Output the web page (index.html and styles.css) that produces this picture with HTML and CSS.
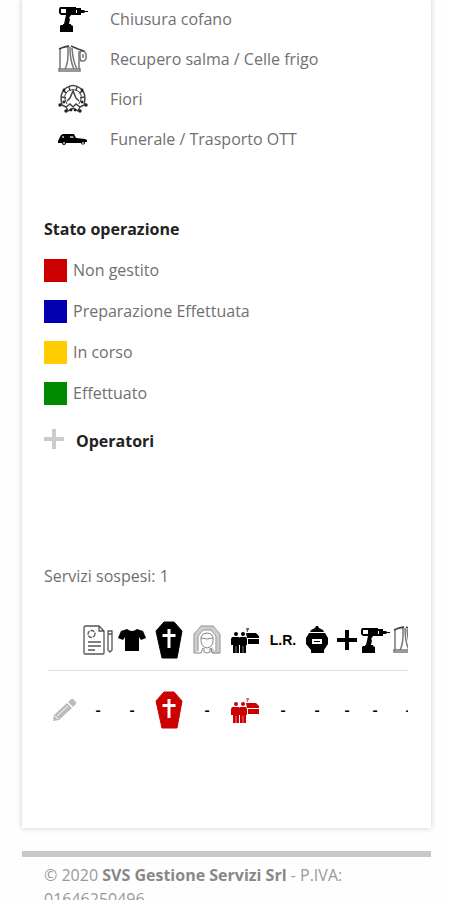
FILE: index.html
```html
<!DOCTYPE html>
<html lang="it">
<head>
<meta charset="utf-8">
<meta name="viewport" content="width=device-width, initial-scale=1">
<title>SVS Gestione Servizi</title>
<link rel="stylesheet" href="styles.css">
</head>
<body>
<svg class="sprite" aria-hidden="true">
  <symbol id="drill" viewBox="0 0 30 26">
    <path d="M2 1h16v1h5v2h3l1 1h3v1h-3l-1 1h-3v2H13l-2 3 1 1-1 5h2v1H5v-1h1l2-9H3L1 7V3z"/>
    <path d="M3 19h10l2 1v6H2v-6z"/>
    <path fill="#fff" d="M3 3h5v4H3zM18 4h1v3h-1z"/>
  </symbol>
  <symbol id="curtain" viewBox="0 0 30 28">
    <g fill="none" stroke="#777" stroke-width="1.500">
      <path d="M2 4v20M10 2v8q0 8-3 14M12 2q0 14 4 22M14 3q1 14 5 21M21 6v18M1 24h21v2H1z"/>
      <path d="M23 6h3l2 3v5l-2 2h-3l-1-3V8zM25 9v4"/>
    </g>
    <path fill="none" stroke="#444" stroke-width="1.800" d="M1 4l5-2 5-1M13 1l7 3 6 2"/>
  </symbol>
  <symbol id="wreath" viewBox="0 0 30 30">
    <g fill="none" stroke="#444">
      <path stroke-width="1.500" d="M4 20Q1 9 8 4q7-5 14 0 7 5 4 16"/>
      <path d="M9 20Q4 11 10 7q5-3 10 0 6 4 1 13"/>
      <path stroke-width="1.500" d="M9 17l3-3 3-7 3 7 3 3M4 13l4 1M5 7l4 2M11 3l1 3M19 3l-1 3M25 7l-4 2M26 13l-4 1M2 20l6 3 4-3 3 3 3-3 4 3 6-3M8 23l2 4 5-3 5 3 2-4"/>
    </g>
    <g fill="#222">
      <circle cx="2" cy="21" r="1.700"/><circle cx="28" cy="21" r="1.700"/><circle cx="6" cy="18" r="1.400"/><circle cx="24" cy="18" r="1.400"/><circle cx="8" cy="27" r="1.700"/><circle cx="22" cy="27" r="1.700"/><circle cx="13" cy="26" r="1.400"/><circle cx="17" cy="26" r="1.400"/><circle cx="6" cy="6" r="1.400"/><circle cx="24" cy="6" r="1.400"/>
    </g>
  </symbol>
  <symbol id="hearse" viewBox="0 0 30 12">
    <path d="M1 6l2-4 2-1h11l2 4 9 1 2 1v2h-2a2 2 0 0 1-4 1H8a2 2 0 0 1-4 0H0V8z"/>
    <path fill="#999" d="M4 3h2v2H4zM12 3h3l1 2h-4z"/>
    <circle cx="6" cy="10" r="1" fill="#ccc"/><circle cx="25" cy="10" r="1" fill="#ccc"/>
  </symbol>
  <symbol id="doc" viewBox="0 0 30 30">
    <g fill="none" stroke="#555" stroke-width="1.300">
      <path d="M3 1h13l5 5v22a1 1 0 0 1-1 1H2a1 1 0 0 1-1-1V3a2 2 0 0 1 2-2zM16 1v5h5"/>
      <circle cx="8.500" cy="9" r="3.500" stroke-dasharray="4 1"/>
      <path d="M5 17h13M5 21h13M5 25h7"/>
      <path d="M25 6h4v19l-2 2-2-2zM25 9h4"/>
    </g>
  </symbol>
  <symbol id="shirt" viewBox="0 0 28 24">
    <path d="M9 1q5 4 10 0l6 2 3 7-5 2-2-3v14H7V9l-2 3-5-2 3-7z"/>
  </symbol>
  <symbol id="coffin" viewBox="0 0 28 38">
    <path d="M9 1h10l8 9-5 27H7L1 10z" stroke="currentColor" stroke-linejoin="round"/>
    <path fill="#fff" d="M12.500 8h3v5h5v3h-5v11h-3V16h-5v-3h5z"/>
  </symbol>
  <symbol id="lady" viewBox="0 0 28 30">
    <path fill="none" stroke="#ccc" stroke-width="3" d="M3 27V10l6-7h10l6 7v17h-5l-2-4"/>
    <g fill="none" stroke="#888">
      <path d="M1 28V9l7-8h12l7 8v19h-8l-1-5M1 28h7l2-5M5 26V11l5-6h8l5 6v15"/>
      <path d="M8 12q-1 10 6 11 7-1 6-11-1-4-6-4t-6 4zM8 13q6 2 12 0M11 23v4l3 1 3-1v-4"/>
    </g>
  </symbol>
  <symbol id="bearers" viewBox="0 0 28 30">
    <circle cx="5" cy="9" r="2"/><circle cx="12" cy="9" r="2"/>
    <path d="M1 12h7l1 1v7H8v8H2v-8H0v-6zM9 12h6l1 2v6h-1v8H9zM15 8h10l3 3v2H16zM17 14h11v5H17z"/>
    <path opacity=".6" d="M15 3h3v2h-1v2h-1z"/>
    <path d="M5 21v7M12 21v7" stroke="#fff" stroke-width=".5"/>
  </symbol>
  <symbol id="urn" viewBox="0 0 22 28">
    <path d="M10 0h2l1 2 4 2 1 2H4l1-2 4-2zM3 7h16l3 5v6l-4 6v3H5v-3l-5-6v-6z"/>
    <path fill="#fff" d="M6 13h10v5H6z"/><path d="M8 15h6v1H8z"/>
  </symbol>
  <symbol id="plus" viewBox="0 0 20 20"><path d="M8 0h4v8h8v4h-8v8H8v-8H0V8h8z"/></symbol>
  <symbol id="pencil" viewBox="0 0 24 24">
    <path d="M1 23l1-6L15 5l5 5L7 22zM16 4l3-3h2l3 3v2l-3 3z"/>
    <path d="M5 18L16 8M3 18l3 3" stroke="#fff" stroke-width="1" fill="none"/>
  </symbol>
</svg>

<main class="card">
  <ul class="services">
    <li><svg class="icon drill"><use href="#drill"/></svg>Chiusura cofano</li>
    <li><svg class="icon curtain"><use href="#curtain"/></svg>Recupero salma / Celle frigo</li>
    <li><svg class="icon wreath"><use href="#wreath"/></svg>Fiori</li>
    <li><svg class="icon hearse"><use href="#hearse"/></svg>Funerale / Trasporto OTT</li>
  </ul>

  <h2 class="heading">Stato operazione</h2>
  <ul class="states">
    <li><span class="swatch red"></span>Non gestito</li>
    <li><span class="swatch blue"></span>Preparazione Effettuata</li>
    <li><span class="swatch yellow"></span>In corso</li>
    <li><span class="swatch green"></span>Effettuato</li>
  </ul>

  <button class="operators" type="button"><svg class="icon plus"><use href="#plus"/></svg>Operatori</button>

  <p class="pending">Servizi sospesi: 1</p>
  <div class="scroller">
    <table class="grid">
      <colgroup>
        <col class="w32"><col class="w36"><col class="w32"><col class="w42"><col class="w34"><col class="w42"><col class="w34"><col class="w34"><col class="w26"><col class="w30"><col class="w36">
      </colgroup>
      <thead>
        <tr>
          <td></td>
          <th><svg class="icon doc"><use href="#doc"/></svg></th>
          <th><svg class="icon shirt"><use href="#shirt"/></svg></th>
          <th><svg class="icon coffin"><use href="#coffin"/></svg></th>
          <th><svg class="icon lady"><use href="#lady"/></svg></th>
          <th><svg class="icon bearers"><use href="#bearers"/></svg></th>
          <th>L.R.</th>
          <th><svg class="icon urn"><use href="#urn"/></svg></th>
          <th><svg class="icon plus"><use href="#plus"/></svg></th>
          <th><svg class="icon drill"><use href="#drill"/></svg></th>
          <th><svg class="icon curtain"><use href="#curtain"/></svg></th>
        </tr>
      </thead>
      <tbody>
        <tr>
          <td><a class="edit" href="#" aria-label="Modifica"><svg class="icon pencil"><use href="#pencil"/></svg></a></td>
          <td>-</td>
          <td>-</td>
          <td class="todo"><svg class="icon coffin"><use href="#coffin"/></svg></td>
          <td>-</td>
          <td class="todo"><svg class="icon bearers"><use href="#bearers"/></svg></td>
          <td>-</td>
          <td>-</td>
          <td>-</td>
          <td>-</td>
          <td>-</td>
        </tr>
      </tbody>
    </table>
  </div>
</main>

<footer class="footer">© 2020 <strong>SVS Gestione Servizi Srl</strong> - P.IVA: 01646250496</footer>
</body>
</html>
```
FILE: styles.css
```css
* {
  box-sizing: border-box;
}

body {
  height: 100vh;
  margin: 0;
  padding: 0 19px 0 22px;
  overflow: hidden;
  background: #fefefe;
  color: #707070;
  font: 400 16px/24px "Open Sans", sans-serif;
}

ul {
  margin: 0;
  padding: 0;
  list-style: none;
}

.sprite {
  position: absolute;
  width: 0;
  height: 0;
}

.icon {
  display: block;
  flex: none;
  fill: currentColor;
}

.card {
  padding: 0 23px 78px 22px;
  background: #fff;
  box-shadow: 0 0 6px rgba(0, 0, 0, 0.2);
}

.services {
  margin-top: -1px;
}

.services li {
  display: grid;
  grid-template-columns: 56px 1fr;
  align-items: center;
  height: 40px;
  padding-left: 10px;
}

.services .icon {
  justify-self: start;
  margin-left: 4px;
  color: #000;
}

.drill { width: 30px; height: 26px; }
.curtain { width: 30px; height: 28px; }
.wreath { width: 30px; height: 30px; }
.hearse { width: 30px; height: 12px; }
.doc { width: 30px; height: 30px; }
.shirt { width: 28px; height: 24px; }
.coffin { width: 28px; height: 38px; }
.lady { width: 28px; height: 30px; }
.bearers { width: 28px; height: 30px; }
.urn { width: 22px; height: 28px; }
.plus { width: 20px; height: 20px; }
.pencil { width: 24px; height: 24px; }

.heading {
  margin: 58px 0 15px;
  color: #222;
  font-size: 16px;
  font-weight: 700;
  line-height: 24px;
}

.states {
  display: grid;
  gap: 17px;
  padding-top: 2px;
}

.states li {
  display: flex;
  align-items: center;
  gap: 6px;
  height: 24px;
}

.swatch {
  width: 23px;
  height: 23px;
}

.red { background: #c00; }
.blue { background: #0000b0; }
.yellow { background: #fc0; }
.green { background: #008a00; }

.operators {
  display: flex;
  align-items: flex-start;
  gap: 12px;
  margin: 24px 0 0;
  padding: 0;
  border: 0;
  background: none;
  color: #222;
  font: 700 16px/24px "Open Sans", sans-serif;
}

.operators .plus {
  color: #ccc;
}

.pending {
  margin: 111px 0 22px;
}

.scroller {
  padding-left: 4px;
  overflow: hidden;
}

.grid {
  width: 378px;
  table-layout: fixed;
  border-collapse: collapse;
  color: #000;
}

.w26 { width: 26px; }
.w30 { width: 30px; }
.w32 { width: 32px; }
.w34 { width: 34px; }
.w36 { width: 36px; }
.w42 { width: 42px; }

.grid th,
.grid td {
  height: 60px;
  padding: 0;
  text-align: center;
}

.grid thead th {
  font: 700 14px/20px "Liberation Sans", sans-serif;
}

.grid tbody td {
  height: 80px;
  border-top: 1px solid #e0e0e0;
  font: 600 16px/20px "Open Sans", sans-serif;
}

.grid .icon {
  margin: 0 auto;
}

.grid .todo {
  color: #c00;
}

.edit {
  color: #bbb;
}

.footer {
  margin-top: 23px;
  padding: 6px 22px 0;
  border-top: 6px solid #c8c8c8;
  color: #999;
}

.footer strong {
  color: #888;
  font-weight: 700;
}
```
